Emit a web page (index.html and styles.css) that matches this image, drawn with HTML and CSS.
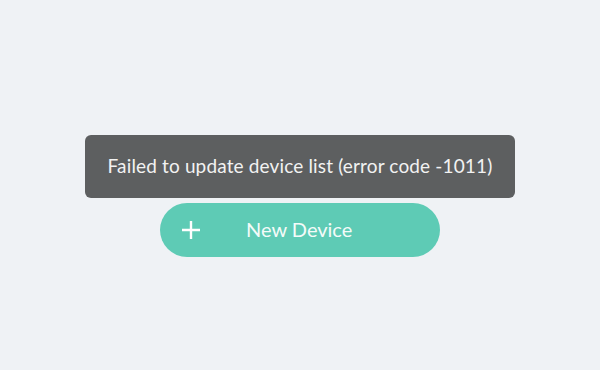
FILE: index.html
```html
<!DOCTYPE html>
<html>
<head>
<meta charset="utf-8">
<link rel="stylesheet" href="styles.css">
</head>
<body>
<main class="stage">
  <div class="toast">Failed to update device list (error code -1011)</div>
  <button class="add-btn">
    <svg class="plus" width="20" height="20" viewBox="0 0 20 20"><path d="M10 1v18M1 10h18" stroke="#fff" stroke-width="2.4" stroke-linecap="butt" fill="none"/></svg>
    <span class="label">New Device</span>
  </button>
</main>
</body>
</html>
```
FILE: styles.css
```css
html, body {
  margin: 0;
  padding: 0;
  background: #eff2f5;
  width: 600px;
  height: 370px;
  overflow: hidden;
}
.stage {
  display: flex;
  flex-direction: column;
  align-items: center;
  padding-top: 135px;
  gap: 5px;
}
.toast {
  box-sizing: border-box;
  width: 430px;
  height: 63px;
  background: #5d5f60;
  border-radius: 6px;
  color: #f2f2f2;
  font-family: Lato, "Noto Sans", sans-serif;
  font-size: 19px;
  display: flex;
  align-items: center;
  justify-content: center;
  padding-bottom: 2px;
  letter-spacing: 0.15px;
}
.add-btn {
  box-sizing: border-box;
  width: 280px;
  height: 54px;
  border: none;
  border-radius: 27px;
  background: #5ecbb5;
  display: flex;
  align-items: center;
  padding: 0 0 0 21px;
  cursor: pointer;
}
.plus {
  display: block;
}
.label {
  color: #f4fbf9;
  font-family: Lato, "Noto Sans", sans-serif;
  font-size: 20px;
  margin-left: 45px;
  padding-bottom: 2px;
}
```
